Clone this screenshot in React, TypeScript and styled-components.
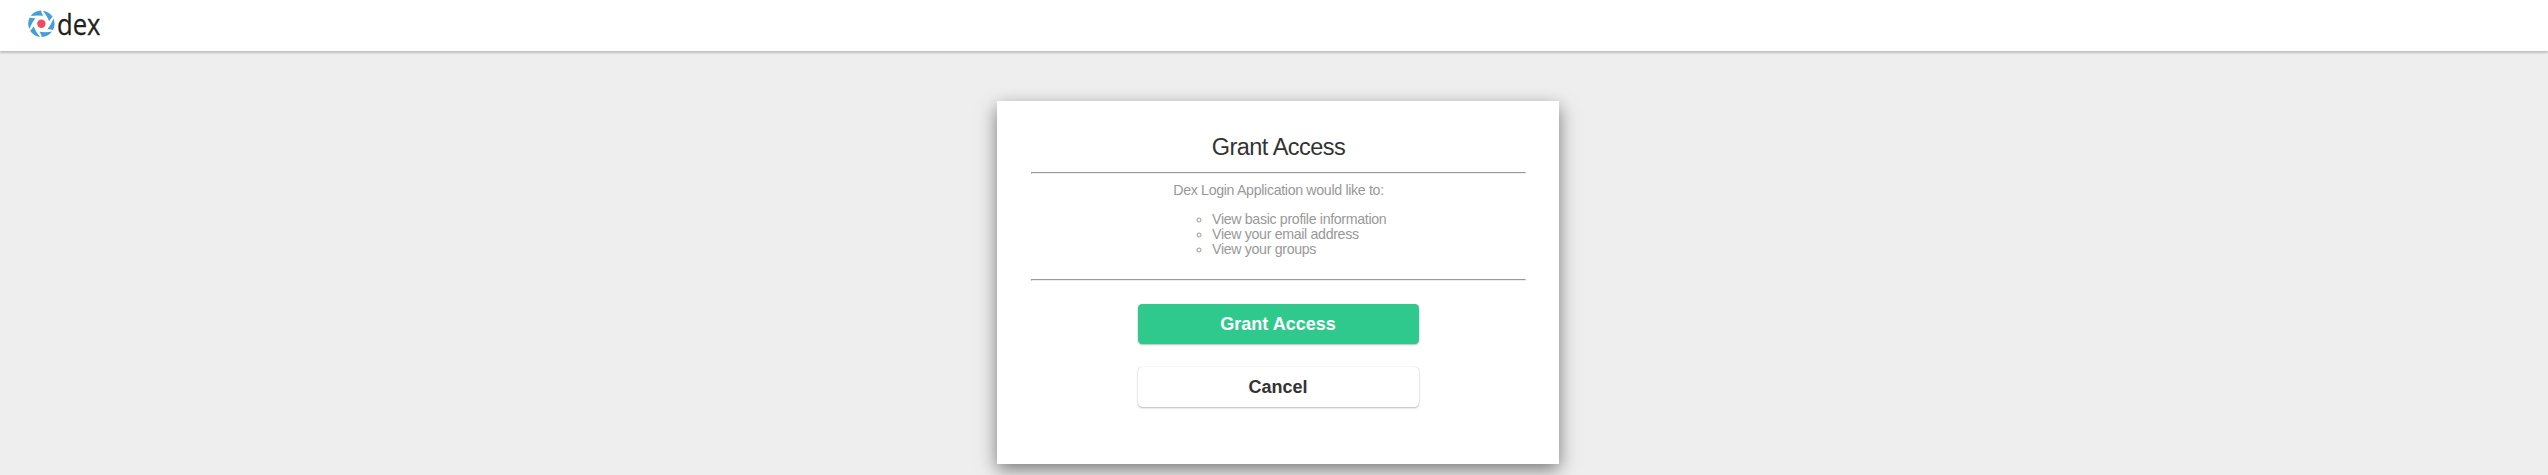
import React from "react";
import styled, { createGlobalStyle } from "styled-components";

const GlobalStyle = createGlobalStyle`
  * { box-sizing: border-box; }
  body {
    margin: 0;
    background: #eee;
    color: #333;
    font-family: "Liberation Sans", Arial, sans-serif;
    overflow: hidden;
  }
`;

const Page = styled.div`
  height: 475px;
  overflow: hidden;
`;

const Navbar = styled.header`
  height: 51px;
  padding: 10px 28px;
  background: #fff;
  box-shadow: 0 2px 2px rgba(0, 0, 0, 0.2);
`;

const Logo = styled.svg`
  display: block;
  width: 74px;
  height: 28px;
  overflow: visible;
`;

const Wordmark = styled.text`
  font-family: "Open Sans", sans-serif;
  font-size: 30px;
  fill: #231f20;
  stroke: #231f20;
  stroke-width: 0.3px;
`;

const Container = styled.main`
  display: flex;
  justify-content: center;
  padding: 50px 0 0 8px;
`;

const Panel = styled.section`
  display: flex;
  flex-direction: column;
  align-items: center;
  width: 562px;
  height: 363px;
  padding: 33px 33px 0 34px;
  background: #fff;
  box-shadow: 0 5.6px 16.9px rgba(0, 0, 0, 0.5);
`;

const Heading = styled.h2`
  margin: 0;
  height: 38px;
  font-size: 23.5px;
  font-weight: 400;
  letter-spacing: -0.5px;
  line-height: 26px;
`;

const Divider = styled.hr`
  width: 100%;
  height: 2px;
  margin: 0;
  border: 1px solid;
  border-color: #999 #eee #eee #999;
`;

const Details = styled.div`
  height: 105px;
  padding-top: 9px;
  color: #999;
  font-size: 14.2px;
  letter-spacing: -0.33px;
  line-height: 15px;
`;

const Intro = styled.div`
  text-align: center;
`;

const Scopes = styled.ul`
  width: 226px;
  margin: 14px 0 0 3px;
  padding-left: 45px;
  list-style: circle;
`;

const Button = styled.button<{ $primary?: boolean }>`
  width: 281px;
  height: 40px;
  margin: 23px 1px 0 0;
  padding: 0;
  border: 0;
  border-radius: 4.5px;
  background: ${(p) => (p.$primary ? "#2fc98e" : "#fff")};
  color: ${(p) => (p.$primary ? "#fff" : "#333")};
  box-shadow: 0 1px 2px rgba(0, 0, 0, 0.25), 0 0 1px rgba(0, 0, 0, 0.25);
  font-family: inherit;
  font-size: 18px;
  font-weight: 700;
  line-height: 40px;
`;

const blades = [0, 60, 120, 180, 240, 300];

export default function App() {
  return (
    <Page>
      <GlobalStyle />
      <Navbar>
        <Logo viewBox="0 0 74 28" role="img" aria-label="dex">
          <g transform="translate(13.4 13.8)">
            {blades.map((angle) => (
              <path
                key={angle}
                d="M-10.6 -7.8 A13.2 13.2 0 0 1 -0.4 -13.2 Q0 -10.8 1.8 -8 Q-4.5 -8.9 -10.6 -7.8 Z"
                transform={`rotate(${angle})`}
                fill="#449fd8"
              />
            ))}
            <circle r="4.2" fill="#f04d5c" />
          </g>
          <Wordmark x="29" y="25.3" textLength="43.5" lengthAdjust="spacingAndGlyphs">
            dex
          </Wordmark>
        </Logo>
      </Navbar>
      <Container>
        <Panel>
          <Heading>Grant Access</Heading>
          <Divider />
          <Details>
            <Intro>Dex Login Application would like to:</Intro>
            <Scopes>
              <li>View basic profile information</li>
              <li>View your email address</li>
              <li>View your groups</li>
            </Scopes>
          </Details>
          <Divider />
          <Button $primary>Grant Access</Button>
          <Button>Cancel</Button>
        </Panel>
      </Container>
    </Page>
  );
}
